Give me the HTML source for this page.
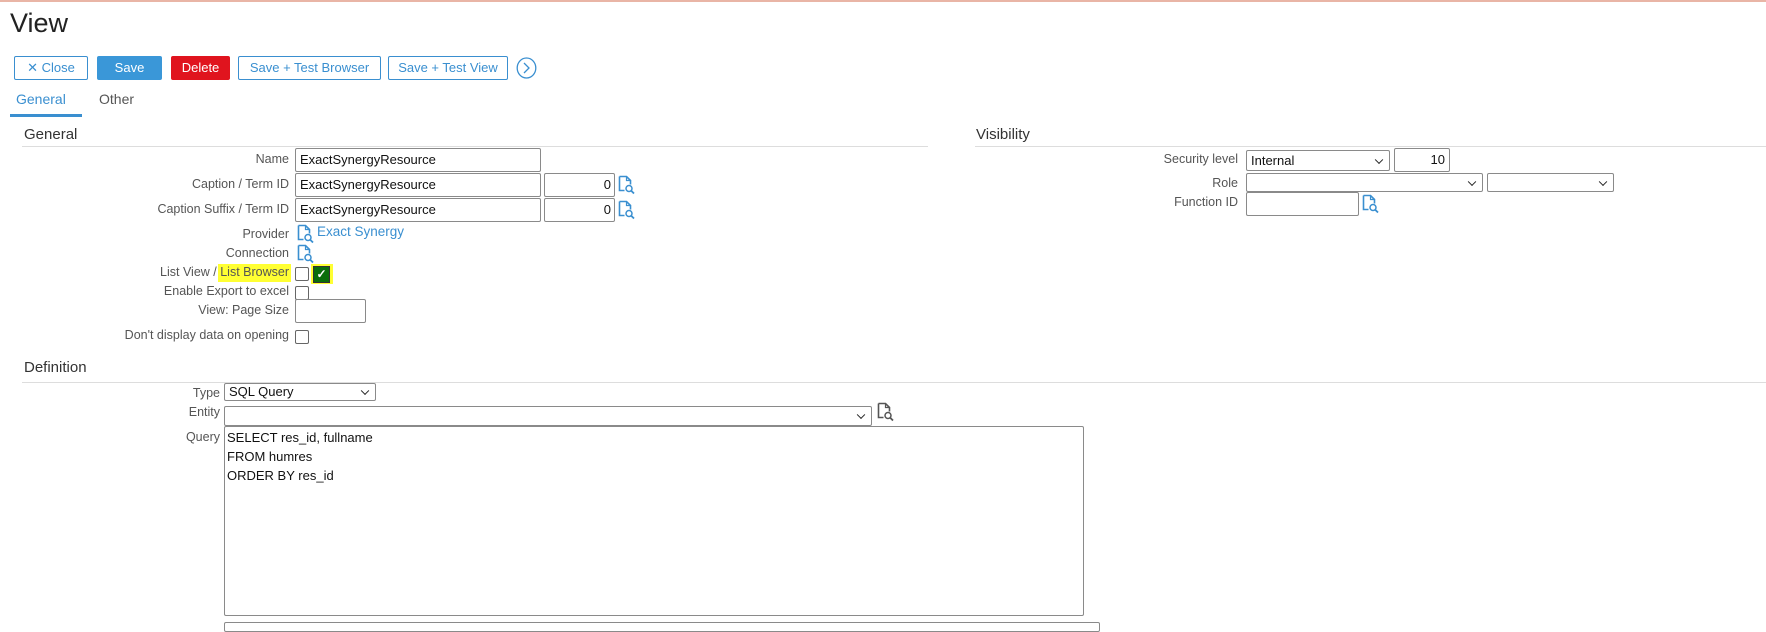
<!DOCTYPE html>
<html><head><meta charset="utf-8"><style>
body{margin:0;width:1766px;height:626px;overflow:hidden;background:#fff;font-family:"Liberation Sans",sans-serif;position:relative;color:#444}
.a{position:absolute}
.topline{left:0;top:0;width:1766px;height:2px;background:#e9b5a6}
.btn{position:absolute;top:56px;height:24px;box-sizing:border-box;font-size:13px;line-height:22px;text-align:center;border:1px solid #3a8fd0;color:#3a8fd0;background:#fff;border-radius:2px}
.lab{position:absolute;font-size:12.5px;color:#555;text-align:right;white-space:nowrap}
.inp{position:absolute;box-sizing:border-box;border:1px solid #8a8a8a;background:#fff;font-size:13px;color:#111;padding-left:4px;line-height:22px;border-radius:2px}
.sec{position:absolute;font-size:15px;color:#333}
.hr{position:absolute;height:1px;background:#ddd}
.cb{position:absolute;width:12px;height:12px;border:1px solid #666;border-radius:2px;background:#fff}
.sel:after{content:"";position:absolute;right:7px;top:50%;width:5px;height:5px;border-right:1.6px solid #222;border-bottom:1.6px solid #222;transform:translateY(-70%) rotate(45deg)}
.ic{position:absolute}
</style></head><body>
<div class="a topline"></div>
<div class="a" style="left:10px;top:8px;font-size:27px;color:#222">View</div>
<div class="btn" style="left:14px;width:74px">✕ Close</div>
<div class="btn" style="left:97px;width:65px;background:#3a97d8;border-color:#3a97d8;color:#fff">Save</div>
<div class="btn" style="left:171px;width:59px;background:#e0141e;border-color:#e0141e;color:#fff">Delete</div>
<div class="btn" style="left:238px;width:143px">Save + Test Browser</div>
<div class="btn" style="left:388px;width:120px">Save + Test View</div>
<svg class="ic" style="left:516px;top:57px" width="21" height="22"><ellipse cx="10.5" cy="11" rx="9.3" ry="10" fill="none" stroke="#3a8fd0" stroke-width="1.3"/><path d="M8 6l5 5-5 5" fill="none" stroke="#3a8fd0" stroke-width="1.3"/></svg>
<div class="a" style="left:16px;top:91px;font-size:14px;color:#3a8fd0">General</div>
<div class="a" style="left:99px;top:91px;font-size:14px;color:#555">Other</div>
<div class="a" style="left:10px;top:114px;width:72px;height:3px;background:#3a8fd0"></div>

<div class="sec" style="left:24px;top:126px">General</div>
<div class="hr" style="left:22px;top:146px;width:906px"></div>
<div class="sec" style="left:976px;top:126px">Visibility</div>
<div class="hr" style="left:975px;top:146px;width:791px"></div>

<div class="lab" style="right:1477px;top:152px">Name</div>
<div class="inp" style="left:295px;top:148px;width:246px;height:24px">ExactSynergyResource</div>
<div class="lab" style="right:1477px;top:177px">Caption / Term ID</div>
<div class="inp" style="left:295px;top:173px;width:246px;height:24px">ExactSynergyResource</div>
<div class="inp" style="left:544px;top:173px;width:71px;height:24px;text-align:right;padding-right:3px">0</div>
<div class="lab" style="right:1477px;top:202px">Caption Suffix / Term ID</div>
<div class="inp" style="left:295px;top:198px;width:246px;height:24px">ExactSynergyResource</div>
<div class="inp" style="left:544px;top:198px;width:71px;height:24px;text-align:right;padding-right:3px">0</div>
<div class="lab" style="right:1477px;top:227px">Provider</div>
<div class="a" style="left:317px;top:224px;font-size:13.5px;color:#3a8fd0">Exact Synergy</div>
<div class="lab" style="right:1477px;top:246px">Connection</div>
<div class="a" style="left:218px;top:264px;width:73px;height:18px;background:#ffff33"></div>
<div class="lab" style="right:1477px;top:265px">List View / List Browser</div>
<div class="cb" style="left:295px;top:267px"></div>
<div class="a" style="left:311px;top:264px;width:22px;height:20px;background:#ffff33"></div>
<div class="a" style="left:313px;top:266px;width:15px;height:15px;background:#0a6e0a;border:1px solid #333;color:#fff;font-size:12px;line-height:15px;text-align:center;font-weight:bold">✓</div>
<div class="lab" style="right:1477px;top:284px">Enable Export to excel</div>
<div class="cb" style="left:295px;top:286px"></div>
<div class="lab" style="right:1477px;top:303px">View: Page Size</div>
<div class="inp" style="left:295px;top:299px;width:71px;height:24px"></div>
<div class="lab" style="right:1477px;top:328px">Don't display data on opening</div>
<div class="cb" style="left:295px;top:330px"></div>

<div class="lab" style="right:528px;top:152px">Security level</div>
<div class="inp sel" style="left:1246px;top:150px;width:144px;height:21px;line-height:19px">Internal</div>
<div class="inp" style="left:1394px;top:148px;width:56px;height:24px;text-align:right;padding-right:4px">10</div>
<div class="lab" style="right:528px;top:176px">Role</div>
<div class="inp sel" style="left:1246px;top:173px;width:237px;height:19px"></div>
<div class="inp sel" style="left:1487px;top:173px;width:127px;height:19px"></div>
<div class="lab" style="right:528px;top:195px">Function ID</div>
<div class="inp" style="left:1246px;top:192px;width:113px;height:24px"></div>

<div class="sec" style="left:24px;top:359px">Definition</div>
<div class="hr" style="left:22px;top:382px;width:1744px"></div>
<div class="lab" style="right:1546px;top:386px">Type</div>
<div class="inp sel" style="left:224px;top:383px;width:152px;height:18px;line-height:16px">SQL Query</div>
<div class="lab" style="right:1546px;top:405px">Entity</div>
<div class="inp sel" style="left:224px;top:406px;width:648px;height:20px"></div>
<div class="lab" style="right:1546px;top:430px">Query</div>
<div class="inp" style="left:224px;top:426px;width:860px;height:190px;padding-top:1px;line-height:19px;font-size:13px;padding-left:2px">SELECT res_id, fullname<br>FROM humres<br>ORDER BY res_id</div>
<div class="inp" style="left:224px;top:622px;width:876px;height:10px"></div>

<svg width="0" height="0" style="position:absolute"><defs><g id="d"><path d="M2.5 1.5h7l4 4v4M2.5 1.5v14h5" fill="none" stroke-width="1.6"/><path d="M9.5 1.5v4h4" fill="none" stroke-width="1.2"/><circle cx="12" cy="13.5" r="3" fill="none" stroke-width="1.5"/><path d="M14.2 15.7l2.8 2.8" stroke-width="1.8"/></g></defs></svg>
<svg class="ic" style="left:617px;top:175px" width="20" height="21" stroke="#3a8fd0"><use href="#d"/></svg>
<svg class="ic" style="left:617px;top:200px" width="20" height="21" stroke="#3a8fd0"><use href="#d"/></svg>
<svg class="ic" style="left:296px;top:224px" width="20" height="21" stroke="#3a8fd0"><use href="#d"/></svg>
<svg class="ic" style="left:296px;top:244px" width="20" height="21" stroke="#3a8fd0"><use href="#d"/></svg>
<svg class="ic" style="left:1361px;top:194px" width="20" height="21" stroke="#3a8fd0"><use href="#d"/></svg>
<svg class="ic" style="left:876px;top:402px" width="20" height="21" stroke="#555"><use href="#d"/></svg>
</body></html>
